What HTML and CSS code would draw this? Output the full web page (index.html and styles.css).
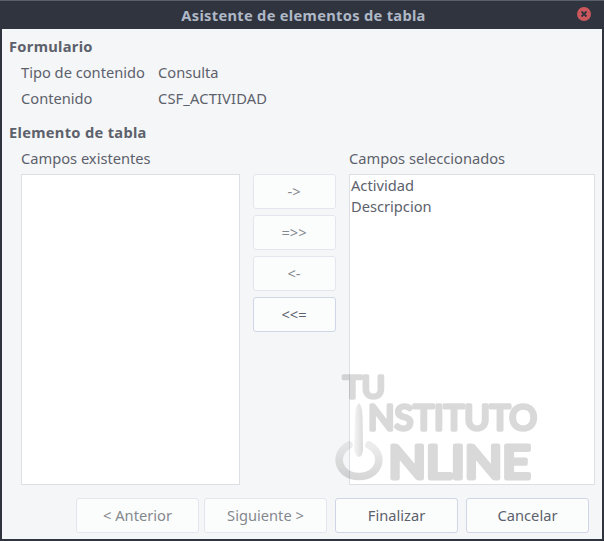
FILE: index.html
```html
<!DOCTYPE html>
<html lang="es">
<head>
<meta charset="utf-8">
<title>Asistente de elementos de tabla</title>
<link rel="stylesheet" href="styles.css">
</head>
<body>
<div class="window">
  <header class="titlebar">
    <h1>Asistente de elementos de tabla</h1>
    <svg class="close" width="14" height="14" viewBox="0 0 14 14"><circle cx="7" cy="7" r="7" fill="#cc575d"/><path d="M4.500 4.500l5 5M9.500 4.500l-5 5" stroke="#2f343f" stroke-width="1.800"/></svg>
  </header>
  <main class="content">
    <h2>Formulario</h2>
    <dl class="info">
      <dt>Tipo de contenido</dt><dd>Consulta</dd>
      <dt>Contenido</dt><dd class="name">CSF_ACTIVIDAD</dd>
    </dl>
    <h2>Elemento de tabla</h2>
    <section class="fields">
      <div class="label">Campos existentes</div>
      <div class="label label-right">Campos seleccionados</div>
      <ul class="list"></ul>
      <div class="moves">
        <button disabled>-&gt;</button>
        <button disabled>=&gt;&gt;</button>
        <button disabled>&lt;-</button>
        <button>&lt;&lt;=</button>
      </div>
      <ul class="list">
        <li>Actividad</li>
        <li>Descripcion</li>
      </ul>
    </section>
    <footer class="actions">
      <button disabled>&lt; Anterior</button>
      <button disabled>Siguiente &gt;</button>
      <button class="finish">Finalizar</button>
      <button class="cancel">Cancelar</button>
    </footer>
  </main>
  <svg class="watermark" width="240" height="150" viewBox="322 350 240 150">
    <defs>
      <linearGradient id="stem" x1="0" x2="1" y1="0" y2="0"><stop offset="0" stop-color="#666" stop-opacity=".06"/><stop offset="1" stop-color="#666" stop-opacity=".24"/></linearGradient>
      <linearGradient id="ring" x1="0" x2="0" y1="0" y2="1"><stop offset="0" stop-color="#666" stop-opacity=".12"/><stop offset="1" stop-color="#666" stop-opacity=".26"/></linearGradient>
    </defs>
    <g class="letters">
      <text x="343" y="398" font-size="30.500" stroke-width="3.500" textLength="42" lengthAdjust="spacingAndGlyphs">TU</text>
      <text x="368" y="430" font-size="34" stroke-width="3.500" textLength="169" lengthAdjust="spacingAndGlyphs">NSTITUTO</text>
      <text x="388.500" y="477.500" font-size="45" stroke-width="4.800" textLength="142" lengthAdjust="spacingAndGlyphs">NLINE</text>
    </g>
    <path class="ring" d="M349 445C332 454 338 476.500 359 476.500S386 454 369 445" fill="none" stroke="url(#ring)" stroke-width="7.500" stroke-linecap="round"/>
    <path class="ring" d="M359 403Q355 406 355 416L354 450Q356 457 359 457T363 450L362.500 416Q362 406 359 403Z" fill="url(#stem)"/>
  </svg>
</div>
</body>
</html>
```

FILE: styles.css
```css
* { box-sizing: border-box; }
body {
  margin: 0;
  font: 14.667px/20px "Noto Sans", sans-serif;
  color: #5c616c;
}
h1, h2, dl, dd, ul { margin: 0; padding: 0; }
.window {
  position: relative;
  display: flex;
  flex-direction: column;
  width: 604px;
  height: 541px;
  padding: 0 2px 2px;
  background: #2f343f;
  border-top: 1px solid #5a606b;
}
.titlebar {
  position: relative;
  height: 28px;
  text-align: center;
}
h1 {
  font-size: 14.667px;
  line-height: 29px;
  letter-spacing: .3px;
  padding-left: 3px;
  color: #afb8c6;
}
.close { position: absolute; top: 6px; right: 11px; }
.content {
  flex: 1;
  padding: 7px 7px 0;
  background: #f5f6f7;
}
h2 { font-size: 14.667px; line-height: 20px; letter-spacing: .3px; }
.info {
  display: grid;
  grid-template-columns: 137px 1fr;
  row-gap: 6px;
  padding: 6px 0 14px 12px;
}
.name { letter-spacing: .15px; }
.fields {
  display: grid;
  grid-template-columns: 219px 83px 246px;
  grid-template-rows: 20px 311px;
  column-gap: 13px;
  row-gap: 6px;
  padding: 6px 0 0 12px;
}
.label { white-space: nowrap; }
.label-right { grid-column: 3; }
.list {
  padding: 0 1px;
  background: #fff;
  border: 1px solid #dcdfe3;
  list-style: none;
  line-height: 21px;
}
.moves { display: flex; flex-direction: column; gap: 6px; }
button {
  height: 35px;
  padding: 0 0 2px;
  font: inherit;
  color: #5c616c;
  background: #fbfdfd;
  border: 1px solid #cfd6e6;
  border-radius: 3px;
}
.moves button { padding-right: 1px; }
button:disabled { color: #85888d; border-color: #e3e6ef; }
.actions {
  display: flex;
  padding: 13px 0 0 67px;
}
.actions button { width: 123px; margin-right: 5px; }
.actions .finish { margin-left: 3px; }
.actions .cancel { margin-left: 3px; }
.watermark {
  position: absolute;
  left: 322px;
  top: 349px;
}
.letters {
  font-family: Lato, sans-serif;
  fill: #555;
  stroke: #555;
  stroke-linejoin: round;
  opacity: .22;
  filter: blur(.6px);
}
.ring { filter: blur(.7px); }
```
